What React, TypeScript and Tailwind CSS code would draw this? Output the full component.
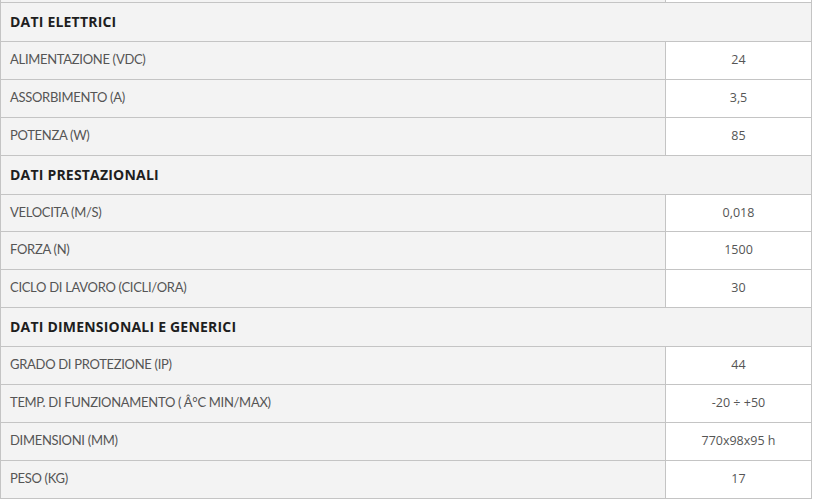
import React from 'react';

type Row = { label: string; value: string };
type Section = { title: string; rows: Row[] };

const sections: Section[] = [
  {
    title: 'DATI ELETTRICI',
    rows: [
      { label: 'ALIMENTAZIONE (VDC)', value: '24' },
      { label: 'ASSORBIMENTO (A)', value: '3,5' },
      { label: 'POTENZA (W)', value: '85' },
    ],
  },
  {
    title: 'DATI PRESTAZIONALI',
    rows: [
      { label: 'VELOCITA (M/S)', value: '0,018' },
      { label: 'FORZA (N)', value: '1500' },
      { label: 'CICLO DI LAVORO (CICLI/ORA)', value: '30' },
    ],
  },
  {
    title: 'DATI DIMENSIONALI E GENERICI',
    rows: [
      { label: 'GRADO DI PROTEZIONE (IP)', value: '44' },
      { label: 'TEMP. DI FUNZIONAMENTO ( Â°C MIN/MAX)', value: '-20 ÷ +50' },
      { label: 'DIMENSIONI (MM)', value: '770x98x95 h' },
      { label: 'PESO (KG)', value: '17' },
    ],
  },
];

const SpecRow = ({ row, short }: { row: Row; short?: boolean }) => (
  <div className={`flex border-b border-[#c4c4c4] ${short ? 'h-[37px]' : 'h-[38px]'}`}>
    <div className="w-[665px] shrink-0 bg-[#f3f3f3] border-r border-[#c4c4c4] flex items-center pl-[9px] pb-[1px] text-[13px] text-[#555] font-['Lato',sans-serif] tracking-[-0.3px]">
      {row.label}
    </div>
    <div className="flex-1 bg-white flex items-center justify-center text-[12.5px] text-[#555] font-['Open_Sans',sans-serif]">
      {row.value}
    </div>
  </div>
);

export default function App() {
  return (
    <div className="w-[815px] h-[502px] bg-white overflow-hidden">
      <div className="w-[812px] border-l border-r border-[#c4c4c4]">
        {/* tail of the previous row */}
        <div className="flex h-[3px] border-b border-[#c4c4c4]">
          <div className="w-[665px] shrink-0 bg-[#f3f3f3] border-r border-[#c4c4c4]" />
          <div className="flex-1 bg-white" />
        </div>
        {sections.map((s, si) => (
          <div key={s.title}>
            <div className="h-[39px] bg-[#f3f3f3] border-b border-[#c4c4c4] flex items-center pl-[9px] pb-[2px] text-[14px] tracking-[0.2px] font-bold text-[#1e1e1e] font-['Open_Sans',sans-serif]">
              {s.title}
            </div>
            {s.rows.map((r, ri) => (
              <SpecRow key={r.label} row={r} short={si === 1 && ri === 0} />
            ))}
          </div>
        ))}
      </div>
    </div>
  );
}
